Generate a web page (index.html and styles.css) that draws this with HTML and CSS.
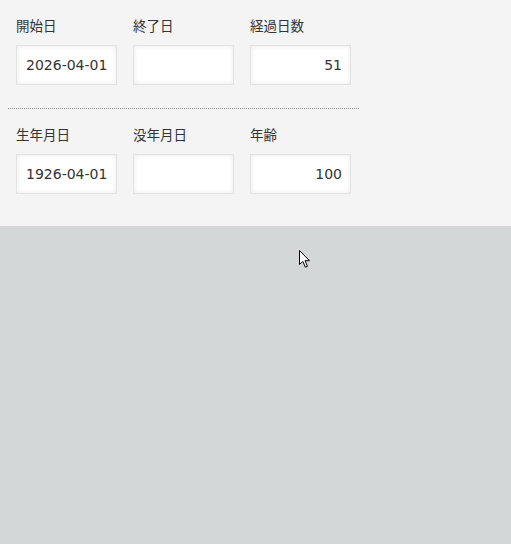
FILE: index.html
```html
<!DOCTYPE html>
<html lang="ja">
<head>
<meta charset="utf-8">
<title>日付計算</title>
<link rel="stylesheet" href="styles.css">
</head>
<body>
<div class="panel">
  <div class="group">
    <div class="row">
      <div class="field">
        <label class="label">開始日</label>
        <input class="input" type="text" value="2026-04-01">
      </div>
      <div class="field">
        <label class="label">終了日</label>
        <input class="input" type="text" value="">
      </div>
      <div class="field">
        <label class="label">経過日数</label>
        <input class="input num" type="text" value="51">
      </div>
    </div>
    <div class="sep"></div>
    <div class="row">
      <div class="field">
        <label class="label">生年月日</label>
        <input class="input" type="text" value="1926-04-01">
      </div>
      <div class="field">
        <label class="label">没年月日</label>
        <input class="input" type="text" value="">
      </div>
      <div class="field">
        <label class="label">年齢</label>
        <input class="input num" type="text" value="100">
      </div>
    </div>
  </div>
</div>
<svg class="cursor" width="13" height="19" viewBox="0 0 13 19">
  <path d="M0.5 0.5 L0.5 14.5 L3.8 11.4 L6.3 17.2 L8.4 16.3 L6 10.7 L10.5 10.7 Z" fill="#fff" stroke="#000" stroke-width="1" stroke-linejoin="miter"/>
</svg>
</body>
</html>
```

FILE: styles.css
```css
html, body {
  margin: 0;
  padding: 0;
}
body {
  background: #d4d7d8;
  font-family: "DejaVu Sans", "Noto Sans CJK JP", sans-serif;
  color: #333;
  min-height: 544px;
  position: relative;
}
.panel {
  background: #f4f4f4;
  padding: 0 8px 32px;
}
.group {
  width: 351px;
}
.row {
  display: flex;
  gap: 16px;
  padding: 15px 8px 0;
}
.field {
  display: flex;
  flex-direction: column;
  gap: 10px;
}
.label {
  font-family: "Noto Sans CJK JP", sans-serif;
  font-size: 13.5px;
  line-height: 20px;
  height: 20px;
  color: #333;
}
.input {
  box-sizing: border-box;
  width: 101px;
  height: 40px;
  margin: 0;
  padding: 0 8px 0 9px;
  border: 1px solid #e1e3e3;
  background: #fff;
  box-shadow: inset 0 0 5px rgba(0, 0, 0, 0.09);
  font-family: "DejaVu Sans", sans-serif;
  font-size: 14px;
  color: #333;
  outline: none;
  border-radius: 0;
}
.num {
  text-align: right;
}
.sep {
  margin-top: 23px;
  border-top: 1px dotted #888;
}
.cursor {
  position: absolute;
  left: 299px;
  top: 250px;
}
```
